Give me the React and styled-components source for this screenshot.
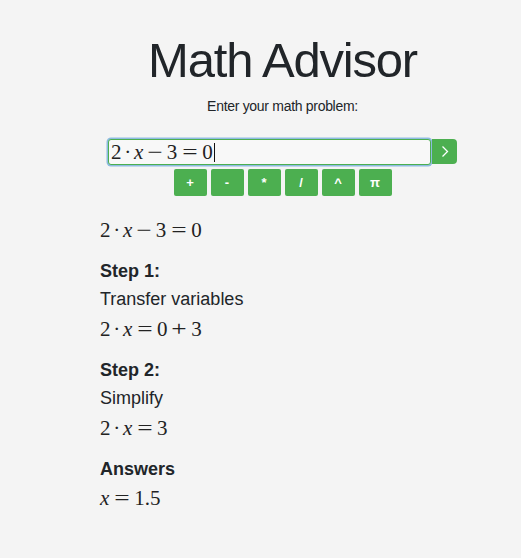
import React from 'react';
import styled, { createGlobalStyle } from 'styled-components';

const GlobalStyle = createGlobalStyle`
  html, body {
    margin: 0;
    padding: 0;
    background: #f4f4f4;
  }
  body {
    font-family: "Liberation Sans", Arial, sans-serif;
    color: #212529;
  }
`;

const OPERATORS = ['+', '-', '*', '/', '^', 'π'];

// a tiny token list per formula: n = number, v = variable, b = binary op, r = relation, d = dot
const FORMULAS = {
  problem: [['n', '2'], ['d', '·'], ['v', 'x'], ['b', '−'], ['n', '3'], ['r', '='], ['n', '0']],
  step1: [['n', '2'], ['d', '·'], ['v', 'x'], ['r', '='], ['n', '0'], ['b', '+'], ['n', '3']],
  step2: [['n', '2'], ['d', '·'], ['v', 'x'], ['r', '='], ['n', '3']],
  answer: [['v', 'x'], ['r', '='], ['n', '1.5']],
};

const STEPS = [
  { title: 'Step 1:', text: 'Transfer variables', formula: FORMULAS.step1 },
  { title: 'Step 2:', text: 'Simplify', formula: FORMULAS.step2 },
];

const tokenMargin = {
  b: '0 0.28em',
  r: '0 0.31em',
  d: '0 0.13em',
};

function Tex({ tokens }) {
  return (
    <>
      {tokens.map(([kind, value], i) => (
        <Styled.Token key={i} $kind={kind}>
          {value}
        </Styled.Token>
      ))}
    </>
  );
}

function App() {
  return (
    <Styled.Page>
      <GlobalStyle />
      <Styled.Column>
        <Styled.Header>
          <Styled.Title>Math Advisor</Styled.Title>
          <Styled.Subtitle>Enter your math problem:</Styled.Subtitle>
          <Styled.InputRow>
            <Styled.Field>
              <Tex tokens={FORMULAS.problem} />
              <Styled.Caret />
            </Styled.Field>
            <Styled.GoButton type="button" aria-label="Solve">
              <svg width="8" height="13" viewBox="0 0 8 13">
                <polyline points="1.5,1.5 6.5,6.5 1.5,11.5" fill="none" stroke="#fff" strokeWidth="1.3" />
              </svg>
            </Styled.GoButton>
          </Styled.InputRow>
          <Styled.OperatorRow>
            {OPERATORS.map(op => (
              <Styled.OpButton key={op} type="button">
                {op}
              </Styled.OpButton>
            ))}
          </Styled.OperatorRow>
        </Styled.Header>

        <Styled.Formula $first>
          <Tex tokens={FORMULAS.problem} />
        </Styled.Formula>

        {STEPS.map(step => (
          <React.Fragment key={step.title}>
            <Styled.StepTitle>{step.title}</Styled.StepTitle>
            <Styled.StepText>{step.text}</Styled.StepText>
            <Styled.Formula>
              <Tex tokens={step.formula} />
            </Styled.Formula>
          </React.Fragment>
        ))}

        <Styled.StepTitle>Answers</Styled.StepTitle>
        <Styled.Formula>
          <Tex tokens={FORMULAS.answer} />
        </Styled.Formula>
      </Styled.Column>
    </Styled.Page>
  );
}

const Styled = {
  Page: styled.div`
    padding: 31px 0 40px 100px;
  `,
  Column: styled.div`
    width: 365px;
  `,
  Header: styled.div`
    display: flex;
    flex-direction: column;
    align-items: center;
  `,
  Title: styled.h1`
    margin: 0;
    font-size: 49px;
    line-height: 59px;
    font-weight: 400;
    letter-spacing: -1.2px;
    color: #212529;
  `,
  Subtitle: styled.p`
    margin: 6px 0 0;
    font-size: 14px;
    line-height: 20px;
    letter-spacing: -0.3px;
    color: #212529;
  `,
  InputRow: styled.div`
    margin-top: 23px;
    display: flex;
    align-items: flex-start;
  `,
  Field: styled.div`
    box-sizing: border-box;
    width: 323px;
    height: 26px;
    margin-right: 1px;
    padding: 0 0 0 2px;
    display: flex;
    align-items: center;
    background: #f8f8f8;
    border: 1px solid #4caf50;
    border-radius: 3px;
    box-shadow: 0 0 0 1.5px #8dbbe0;
    font-family: "Liberation Serif", "Times New Roman", serif;
    font-size: 21px;
    line-height: 24px;
    color: #222;
  `,
  Caret: styled.span`
    width: 1px;
    height: 19px;
    margin-left: 1px;
    background: #111;
  `,
  GoButton: styled.button`
    box-sizing: border-box;
    width: 25px;
    height: 25px;
    padding: 0;
    display: flex;
    align-items: center;
    justify-content: center;
    background: #4caf50;
    border: none;
    border-radius: 0 4px 4px 0;
  `,
  OperatorRow: styled.div`
    margin-top: 4px;
    display: flex;
    gap: 4px;
  `,
  OpButton: styled.button`
    width: 33px;
    height: 27px;
    padding: 0;
    background: #4caf50;
    border: none;
    border-radius: 2px;
    color: #fff;
    font-family: "Liberation Sans", Arial, sans-serif;
    font-size: 13px;
    font-weight: 700;
  `,
  Formula: styled.div`
    margin-top: ${p => (p.$first ? '19px' : '0')};
    font-family: "Liberation Serif", "Times New Roman", serif;
    font-size: 21px;
    line-height: 30px;
    color: #222;
    white-space: nowrap;
  `,
  Token: styled.span`
    display: inline-block;
    font-style: ${p => (p.$kind === 'v' ? 'italic' : 'normal')};
    margin: ${p => tokenMargin[p.$kind] || '0'};
    transform: ${p => (p.$kind === 'b' || p.$kind === 'r' ? 'scaleX(1.3)' : 'none')};
  `,
  StepTitle: styled.h4`
    margin: 12px 0 0;
    font-size: 18px;
    line-height: 28px;
    font-weight: 700;
    color: #212529;
  `,
  StepText: styled.p`
    margin: 0;
    font-size: 18px;
    line-height: 29px;
    color: #212529;
  `,
};

export default App;
